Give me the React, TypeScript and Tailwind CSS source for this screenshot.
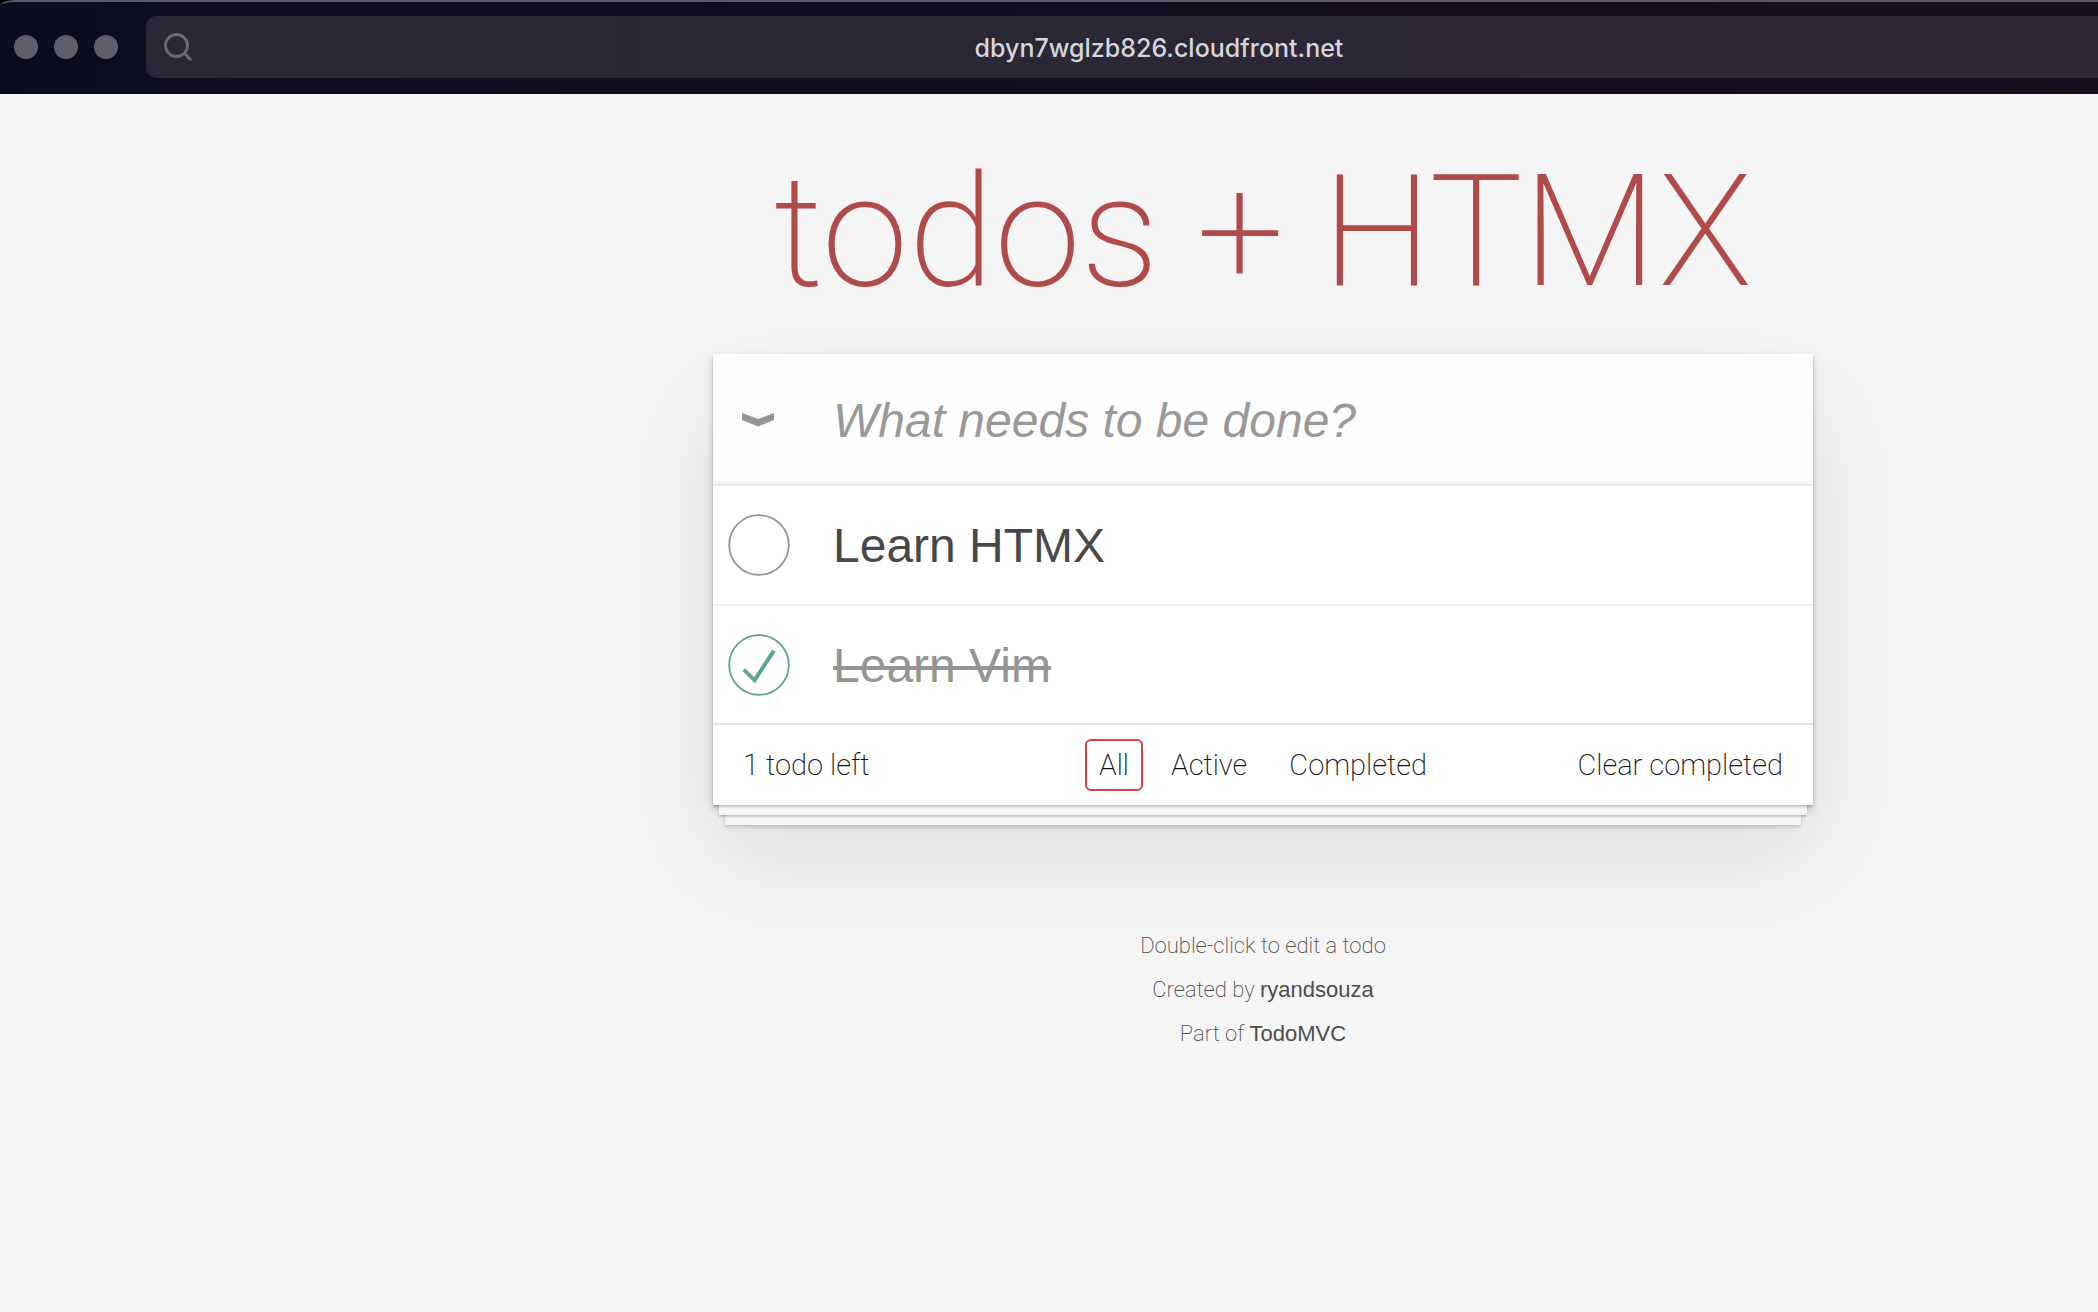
import React, { useState } from 'react';

type Todo = { id: string; title: string; done: boolean };

const initialTodos: Todo[] = [
  { id: 'htmx', title: 'Learn HTMX', done: false },
  { id: 'vim', title: 'Learn Vim', done: true },
];

const filters = ['All', 'Active', 'Completed'];

function BrowserBar() {
  return (
    <header className="bg-black">
      <div className="flex items-center overflow-hidden rounded-tl-[16px_6px] border-t-2 border-[#5b5a66] bg-linear-to-r from-[#0c0c20] via-[#120d20] to-[#190e20] pt-[14px] pb-4 pl-[14px]">
        <div className="flex shrink-0 gap-4">
          <button aria-label="Close" className="size-6 rounded-full bg-[#5f5e6a]" />
          <button aria-label="Minimize" className="size-6 rounded-full bg-[#5f5e6a]" />
          <button aria-label="Zoom" className="size-6 rounded-full bg-[#5f5e6a]" />
        </div>
        <label className="ml-7 flex h-[62px] grow items-center rounded-l-[10px] bg-linear-to-r from-[#282838] via-[#2b2737] to-[#312837] pl-[18px]">
          <svg viewBox="0 0 28 28" className="size-7 shrink-0" fill="none" stroke="#6c6a78" strokeWidth="2.8" strokeLinecap="round" aria-hidden="true">
            <circle cx="12.5" cy="12.5" r="11" />
            <path d="M20.5 20.5 L26.5 26.5" />
          </svg>
          <input
            aria-label="Address"
            defaultValue="dbyn7wglzb826.cloudfront.net"
            className="ml-7 min-w-0 grow bg-transparent pt-px text-center font-['Inter',sans-serif] text-[25px] leading-8 font-medium text-[#d6d5da] outline-none"
          />
        </label>
      </div>
    </header>
  );
}

function Toggle({ todo, onChange }: { todo: Todo; onChange: () => void }) {
  return (
    <span className="relative ml-[15px] size-[62px] shrink-0">
      <input
        id={todo.id}
        type="checkbox"
        checked={todo.done}
        onChange={onChange}
        className="absolute inset-0 size-full cursor-pointer appearance-none"
      />
      <svg viewBox="-1.5 -1.5 103 103" className="pointer-events-none size-full" fill="none" aria-hidden="true">
        <circle cx="50" cy="50" r="49.5" strokeWidth="3" stroke={todo.done ? '#59a193' : '#949494'} />
        {todo.done && <path fill="#5aa494" stroke="#5aa494" d="M72 25L42 71 27 56l-4 4 20 20 34-52z" />}
      </svg>
    </span>
  );
}

export default function App() {
  const [todos, setTodos] = useState(initialTodos);
  const [filter, setFilter] = useState('All');
  const flip = (id: string) => setTodos(todos.map((t) => (t.id === id ? { ...t, done: !t.done } : t)));
  const left = todos.filter((t) => !t.done).length;
  const shown = todos.filter((t) => filter === 'All' || t.done === (filter === 'Completed'));

  return (
    <div className="min-h-screen overflow-hidden bg-[#f5f5f5] font-['Roboto',sans-serif]">
      <BrowserBar />
      <main className="pt-[58px] pl-[428px]">
        <h1 className="text-center text-[156px] leading-[160px] font-extralight whitespace-nowrap text-[#b04a4b]">
          todos + HTMX
        </h1>

        <section className="mx-auto mt-[42px] max-w-[1100px] bg-white shadow-[0_2px_2px_rgba(0,0,0,0.2),0_16px_0_-6px_#f6f6f6,0_18px_2px_-6px_rgba(0,0,0,0.2),0_32px_0_-12px_#f6f6f6,0_34px_4px_-12px_rgba(0,0,0,0.2),0_4px_8px_rgba(0,0,0,0.2),0_50px_100px_rgba(0,0,0,0.1)]">
          <div className="flex h-[130px] items-center bg-[#fefefe] pt-[2px] font-['Liberation_Sans',sans-serif] shadow-[inset_0_-4px_2px_rgba(0,0,0,0.03)]">
            <button
              aria-label="Mark all as complete"
              onClick={() => setTodos(todos.map((t) => ({ ...t, done: left > 0 })))}
              className="flex h-full w-[90px] shrink-0 items-center justify-center"
            >
              <svg viewBox="0 0 32 14" className="h-[14px] w-8" fill="#949494" aria-hidden="true">
                <path d="M0 0L16 6 32 0V7L16 13.5 0 7z" />
              </svg>
            </button>
            <input
              aria-label="New todo"
              placeholder="What needs to be done?"
              className="ml-[30px] h-full min-w-0 grow bg-transparent text-[48px] text-[#484848] outline-none placeholder:text-[#999999] placeholder:italic"
            />
          </div>

          <ul className="border-t-2 border-[#e6e6e6] font-['Liberation_Sans',sans-serif]">
            {shown.map((todo) => (
              <li key={todo.id} className="flex h-[120px] items-center border-b-2 border-[#ededed] last:h-[117px] last:border-b-0">
                <Toggle todo={todo} onChange={() => flip(todo.id)} />
                <label
                  htmlFor={todo.id}
                  className={
                    todo.done
                      ? 'ml-[43px] pt-[2px] text-[48px] leading-[58px] text-[#949494] line-through decoration-4'
                      : 'ml-[43px] pt-[2px] text-[48px] leading-[58px] text-[#484848]'
                  }
                >
                  {todo.title}
                </label>
              </li>
            ))}
          </ul>

          <footer className="grid grid-cols-[1fr_auto_1fr] items-center border-t-2 border-[#e6e6e6] px-[30px] py-[14px] text-[29px] leading-9 font-extralight text-[#111111]">
            <span>{left} todo left</span>
            <nav className="flex gap-[14px]">
              {filters.map((name) => (
                <a
                  key={name}
                  href="#"
                  onClick={(e) => {
                    e.preventDefault();
                    setFilter(name);
                  }}
                  className={
                    name === filter
                      ? 'rounded-md border-2 border-[#ce4646] px-3 py-[6px]'
                      : 'rounded-md border-2 border-transparent px-3 py-[6px]'
                  }
                >
                  {name}
                </a>
              ))}
            </nav>
            <button className="justify-self-end" onClick={() => setTodos(todos.filter((t) => !t.done))}>
              Clear completed
            </button>
          </footer>
        </section>

        <div className="mt-[119px] text-center text-[22px] leading-[44px] font-extralight text-[#4d4d4d]">
          <p>Double-click to edit a todo</p>
          <p>
            Created by <a href="#" className="font-['Liberation_Sans',sans-serif] font-normal">ryandsouza</a>
          </p>
          <p>
            Part of <a href="#" className="font-['Liberation_Sans',sans-serif] font-normal">TodoMVC</a>
          </p>
        </div>
      </main>
    </div>
  );
}
